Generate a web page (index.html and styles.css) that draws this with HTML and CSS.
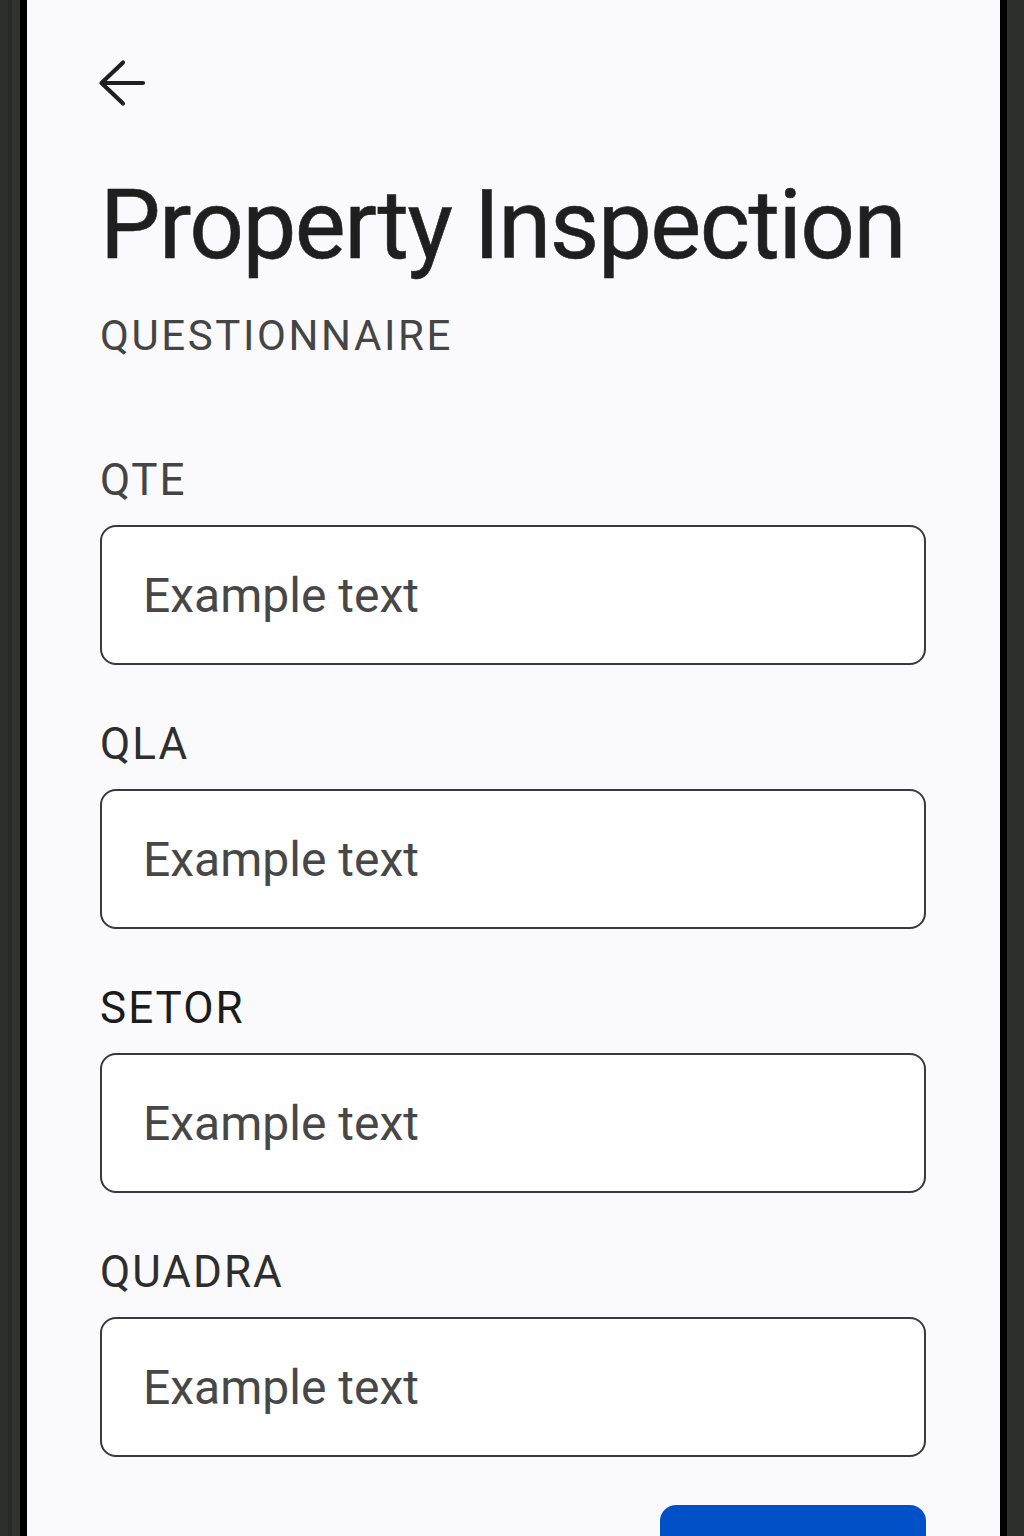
FILE: index.html
```html
<!DOCTYPE html>
<html lang="en">
<head>
<meta charset="utf-8">
<title>Property Inspection</title>
<link rel="stylesheet" href="styles.css">
</head>
<body>
<div class="device">
  <main class="screen">
    <button class="back" aria-label="Back">
      <svg width="48" height="48" viewBox="0 0 48 48" fill="none" stroke="#1f1f1f" stroke-width="4.2" stroke-linecap="round" stroke-linejoin="round">
        <path d="M45 24H3.5M25 3.5L3.5 24L25 44.5"/>
      </svg>
    </button>
    <h1 class="title">Property Inspection</h1>
    <p class="subtitle">QUESTIONNAIRE</p>
    <form class="form">
      <div class="field">
        <label class="label label-gray" for="qte">QTE</label>
        <input class="input" id="qte" type="text" placeholder="Example text">
      </div>
      <div class="field">
        <label class="label label-dark" for="qla">QLA</label>
        <input class="input" id="qla" type="text" placeholder="Example text">
      </div>
      <div class="field">
        <label class="label label-black" for="setor">SETOR</label>
        <input class="input" id="setor" type="text" placeholder="Example text">
      </div>
      <div class="field">
        <label class="label label-dark" for="quadra">QUADRA</label>
        <input class="input" id="quadra" type="text" placeholder="Example text">
      </div>
      <div class="actions">
        <button class="primary" type="button"></button>
      </div>
    </form>
  </main>
</div>
</body>
</html>
```

FILE: styles.css
```css
html, body {
  margin: 0;
  padding: 0;
  height: 100%;
}
body {
  background: #2b2d29;
  font-family: Roboto, "Noto Sans", sans-serif;
  overflow: hidden;
}
.device {
  display: flex;
  height: 1536px;
  padding: 0 17px 0 20px;
  background: linear-gradient(90deg, #2c2e2a 0 8px, #262824 8px 12px, #30322e 12px 20px, #2c2e2a 20px);
  box-sizing: border-box;
}
.screen {
  flex: 1;
  background: #fafafc;
  border-left: 7px solid #000;
  border-right: 7px solid #000;
  padding: 59px 0 0 73px;
  box-sizing: border-box;
  display: flex;
  flex-direction: column;
  overflow: hidden;
}
.back {
  width: 48px;
  height: 48px;
  padding: 0;
  border: 0;
  background: none;
  display: block;
  margin: 0 0 0 -2px;
}
.back svg { display: block; }
.title {
  margin: 70px 0 0 0;
  font-size: 96px;
  line-height: 96px;
  font-weight: 400;
  color: #1f1f1f;
  letter-spacing: -1.5px;
  -webkit-text-stroke: 0.6px #1f1f1f;
}
.subtitle {
  margin: 39px 0 0 0;
  font-size: 42px;
  line-height: 48px;
  color: #454545;
  letter-spacing: 2.6px;
}
.form {
  display: flex;
  flex-direction: column;
  gap: 53px;
  margin-top: 94px;
  width: 826px;
}
.field {
  display: flex;
  flex-direction: column;
  gap: 19px;
}
.label {
  font-size: 44px;
  line-height: 52px;
  letter-spacing: 2px;
}
.label-gray { color: #444; }
.label-dark { color: #2e2e2e; }
.label-black { color: #1c1c1c; }
.input {
  box-sizing: border-box;
  height: 140px;
  width: 100%;
  border: 2px solid #3a3a3a;
  border-radius: 16px;
  background: #fefeff;
  padding: 0 0 0 41px;
  font-family: Roboto, sans-serif;
  font-size: 48px;
  color: #444;
  outline: none;
}
.input::placeholder {
  color: #474747;
  opacity: 1;
}
.actions {
  display: flex;
  justify-content: flex-end;
  margin-top: -5px;
}
.primary {
  width: 266px;
  height: 100px;
  border: 0;
  border-radius: 16px;
  background: #0050c8;
}
```
